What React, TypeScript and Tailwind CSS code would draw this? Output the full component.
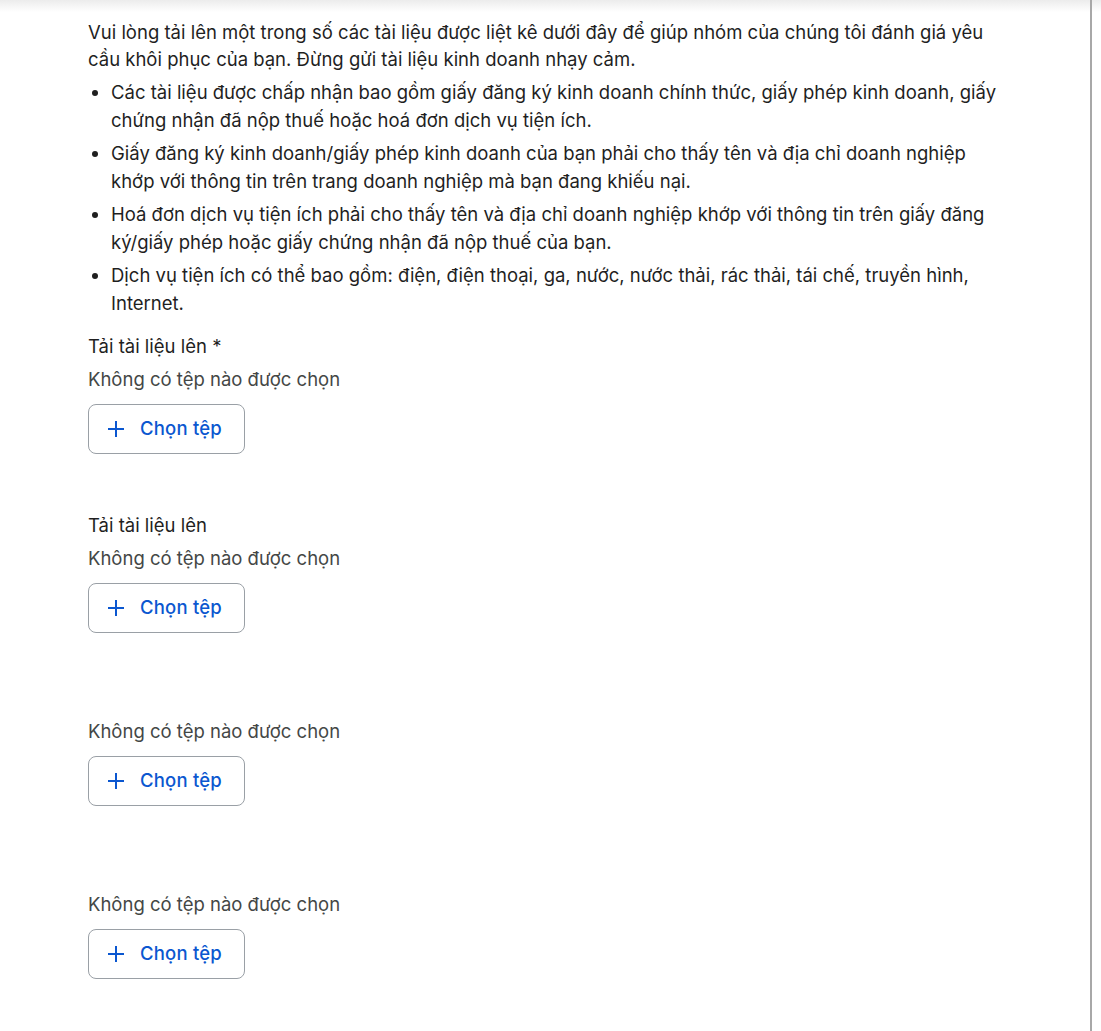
import * as React from 'react';

const bullets = [
  'Các tài liệu được chấp nhận bao gồm giấy đăng ký kinh doanh chính thức, giấy phép kinh doanh, giấy chứng nhận đã nộp thuế hoặc hoá đơn dịch vụ tiện ích.',
  'Giấy đăng ký kinh doanh/giấy phép kinh doanh của bạn phải cho thấy tên và địa chỉ doanh nghiệp khớp với thông tin trên trang doanh nghiệp mà bạn đang khiếu nại.',
  'Hoá đơn dịch vụ tiện ích phải cho thấy tên và địa chỉ doanh nghiệp khớp với thông tin trên giấy đăng ký/giấy phép hoặc giấy chứng nhận đã nộp thuế của bạn.',
  'Dịch vụ tiện ích có thể bao gồm: điện, điện thoại, ga, nước, nước thải, rác thải, tái chế, truyền hình, Internet.',
];

const PlusIcon = () => (
  <svg width="18" height="18" viewBox="0 0 18 18" fill="none">
    <path d="M9 1v16M1 9h16" stroke="currentColor" strokeWidth="2" />
  </svg>
);

const Upload = ({ label }: { label?: string }) => (
  <div className="flex flex-col">
    {label ? (
      <div className="text-[#1f1f1f] leading-[28px] mb-[5px]">{label}</div>
    ) : (
      <div className="h-[27px]" />
    )}
    <div className="text-[#444746] leading-[28px]">Không có tệp nào được chọn</div>
    <button className="mt-[11px] w-[157px] h-[50px] flex items-center gap-[15px] pl-[18px] border border-[#9aa0a6] rounded-[8px] text-[#0b57d0] font-medium">
      <PlusIcon />
      <span className="tracking-[0.2px]">Chọn tệp</span>
    </button>
  </div>
);

export default function App() {
  return (
    <div className="relative w-[1101px] h-[1031px] bg-white overflow-hidden text-[18.5px] [font-family:Inter,Roboto,sans-serif]">
      <div className="absolute top-0 left-0 right-0 h-[12px] bg-gradient-to-b from-[#ececec] to-white" />
      <div className="absolute top-0 bottom-0 left-[1090px] w-[2px] bg-[#a8a8a8]" />
      <div className="pl-[88px] pt-[19px] w-[1004px]">
        <p className="text-[#1f1f1f] leading-[27px]">
          Vui lòng tải lên một trong số các tài liệu được liệt kê dưới đây để giúp nhóm của chúng tôi đánh giá yêu
          cầu khôi phục của bạn. Đừng gửi tài liệu kinh doanh nhạy cảm.
        </p>
        <ul className="list-disc pl-[23px] mt-[5px] text-[#1f1f1f] leading-[28px] flex flex-col gap-[5px]">
          {bullets.map((b) => (
            <li key={b}>{b}</li>
          ))}
        </ul>
        <div className="mt-[15px] flex flex-col gap-[57px]">
          <Upload label="Tải tài liệu lên *" />
          <Upload label="Tải tài liệu lên" />
          <Upload />
          <Upload />
        </div>
      </div>
    </div>
  );
}
